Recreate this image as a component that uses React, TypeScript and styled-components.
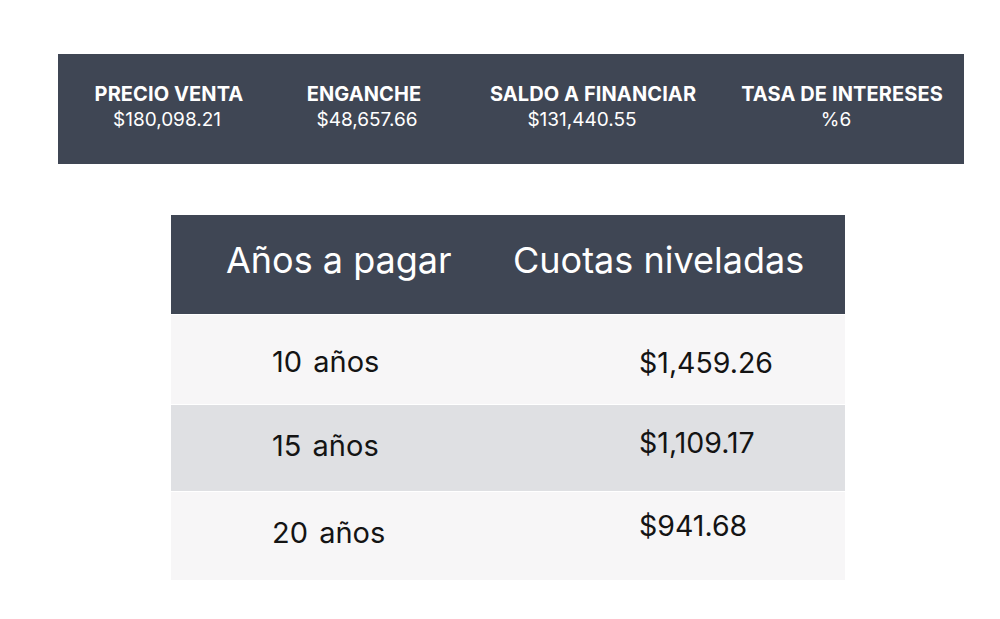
import styled, { createGlobalStyle } from 'styled-components';

const GlobalStyle = createGlobalStyle`
  body {
    margin: 0;
    background: #ffffff;
    font-family: 'Inter', 'Noto Sans', sans-serif;
  }
`;

const Page = styled.div`
  width: 1000px;
  height: 619px;
  padding-top: 54px;
  box-sizing: border-box;
`;

const SummaryBar = styled.div`
  margin-left: 58px;
  width: 906px;
  height: 110px;
  background: #3f4654;
  display: grid;
  grid-template-columns: 222px 168px 290px 208px;
  align-content: center;
  padding-bottom: 4px;
  box-sizing: border-box;
  color: #ffffff;
`;

const SummaryItem = styled.div`
  display: flex;
  flex-direction: column;
  align-items: center;
`;

const SummaryLabel = styled.div`
  font-weight: 700;
  font-size: 20px;
  line-height: 24px;
  letter-spacing: 0.1px;
  white-space: nowrap;
`;

const SummaryValue = styled.div<{ shift: number }>`
  font-size: 19px;
  line-height: 24px;
  margin-top: 2px;
  margin-left: ${(p) => p.shift}px;
`;

const Table = styled.div`
  margin: 51px 0 0 171px;
  width: 674px;
`;

const HeaderRow = styled.div`
  height: 99px;
  background: #3f4654;
  display: grid;
  grid-template-columns: 342px 332px;
  align-items: center;
  color: #ffffff;
  font-size: 36px;
  padding-bottom: 10px;
  box-sizing: border-box;
`;

const HeaderCell = styled.div<{ indent: number }>`
  padding-left: ${(p) => p.indent}px;
  white-space: nowrap;
`;

const Row = styled.div<{ shade: boolean; h: number }>`
  height: ${(p) => p.h}px;
  background: ${(p) => (p.shade ? '#dfe0e3' : '#f7f6f7')};
  border-top: 1px solid #ffffff;
  display: grid;
  grid-template-columns: 468px 206px;
  color: #141414;
  font-size: 29px;
  &:first-of-type {
    border-top: none;
  }
`;

const Cell = styled.div<{ lift: number }>`
  display: flex;
  align-items: center;
  transform: translateY(${(p) => -p.lift}px);
`;

const YearCell = styled(Cell)`
  padding-left: 101px;
  word-spacing: 3px;
`;

const AmountCell = styled(Cell)`
  font-size: 28.5px;
`;

const summary = [
  { label: 'PRECIO VENTA', value: '$180,098.21', shift: -4 },
  { label: 'ENGANCHE', value: '$48,657.66', shift: 6 },
  { label: 'SALDO A FINANCIAR', value: '$131,440.55', shift: -22 },
  { label: 'TASA DE INTERESES', value: '%6', shift: -12 },
];

const rows = [
  { years: '10 años', amount: '$1,459.26', h: 89, yLift: -2, aLift: -3 },
  { years: '15 años', amount: '$1,109.17', h: 86, yLift: 3, aLift: 6 },
  { years: '20 años', amount: '$941.68', h: 88, yLift: 4, aLift: 11 },
];

export default function App() {
  return (
    <Page>
      <GlobalStyle />
      <SummaryBar>
        {summary.map((s) => (
          <SummaryItem key={s.label}>
            <SummaryLabel>{s.label}</SummaryLabel>
            <SummaryValue shift={s.shift}>{s.value}</SummaryValue>
          </SummaryItem>
        ))}
      </SummaryBar>
      <Table>
        <HeaderRow>
          <HeaderCell indent={55}>Años a pagar</HeaderCell>
          <HeaderCell indent={0}>Cuotas niveladas</HeaderCell>
        </HeaderRow>
        {rows.map((r, i) => (
          <Row key={r.years} shade={i === 1} h={r.h}>
            <YearCell lift={r.yLift}>{r.years}</YearCell>
            <AmountCell lift={r.aLift}>{r.amount}</AmountCell>
          </Row>
        ))}
      </Table>
    </Page>
  );
}
